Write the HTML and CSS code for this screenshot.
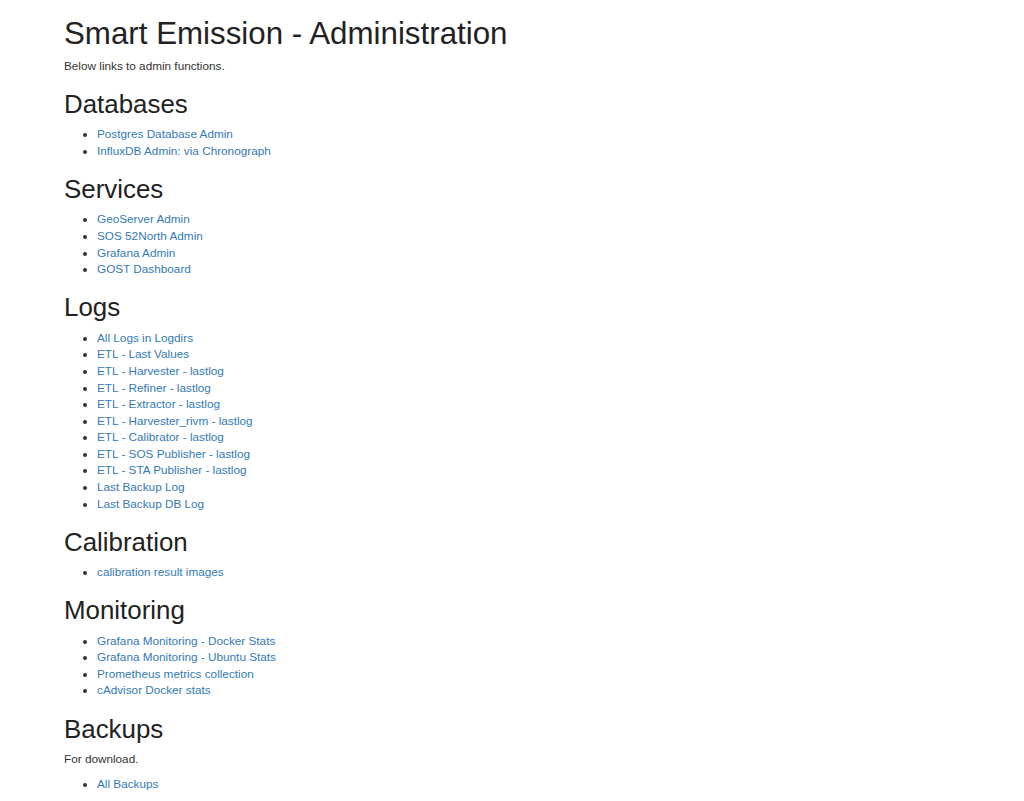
FILE: index.html
```html
<!DOCTYPE html>
<html lang="en">
<head>
<meta charset="utf-8">
<title>Smart Emission - Administration</title>
<link rel="stylesheet" href="styles.css">
</head>
<body>
<div class="container">
  <h1>Smart Emission - Administration</h1>
  <p>Below links to admin functions.</p>

  <h2>Databases</h2>
  <ul>
    <li><a href="#">Postgres Database Admin</a></li>
    <li><a href="#">InfluxDB Admin: via Chronograph</a></li>
  </ul>

  <h2>Services</h2>
  <ul>
    <li><a href="#">GeoServer Admin</a></li>
    <li><a href="#">SOS 52North Admin</a></li>
    <li><a href="#">Grafana Admin</a></li>
    <li><a href="#">GOST Dashboard</a></li>
  </ul>

  <h2>Logs</h2>
  <ul>
    <li><a href="#">All Logs in Logdirs</a></li>
    <li><a href="#">ETL - Last Values</a></li>
    <li><a href="#">ETL - Harvester - lastlog</a></li>
    <li><a href="#">ETL - Refiner - lastlog</a></li>
    <li><a href="#">ETL - Extractor - lastlog</a></li>
    <li><a href="#">ETL - Harvester_rivm - lastlog</a></li>
    <li><a href="#">ETL - Calibrator - lastlog</a></li>
    <li><a href="#">ETL - SOS Publisher - lastlog</a></li>
    <li><a href="#">ETL - STA Publisher - lastlog</a></li>
    <li><a href="#">Last Backup Log</a></li>
    <li><a href="#">Last Backup DB Log</a></li>
  </ul>

  <h2>Calibration</h2>
  <ul>
    <li><a href="#">calibration result images</a></li>
  </ul>

  <h2>Monitoring</h2>
  <ul>
    <li><a href="#">Grafana Monitoring - Docker Stats</a></li>
    <li><a href="#">Grafana Monitoring - Ubuntu Stats</a></li>
    <li><a href="#">Prometheus metrics collection</a></li>
    <li><a href="#">cAdvisor Docker stats</a></li>
  </ul>

  <h2>Backups</h2>
  <p>For download.</p>
  <ul>
    <li><a href="#">All Backups</a></li>
  </ul>
</div>
</body>
</html>
```
FILE: styles.css
```css
html, body {
  margin: 0;
  padding: 0;
  background: #fff;
}
body {
  font-family: "Liberation Sans", Arial, Helvetica, sans-serif;
  font-size: 11.75px;
  line-height: 16.6px;
  color: #333;
}
.container {
  padding: 0 64px;
}
h1, h2 {
  font-family: "Liberation Sans", Arial, Helvetica, sans-serif;
  font-weight: 500;
  color: #222;
  margin: 16.6px 0 8.3px 0;
}
h1 {
  font-size: 31.3px;
  line-height: 33px;
}
h2 {
  font-size: 25.9px;
  line-height: 27px;
}
p {
  margin: 0 0 8.3px 0;
}
ul {
  margin: 0 0 8.3px 0;
  padding-left: 33px;
}
a {
  color: #337ab7;
  text-decoration: none;
}
```
